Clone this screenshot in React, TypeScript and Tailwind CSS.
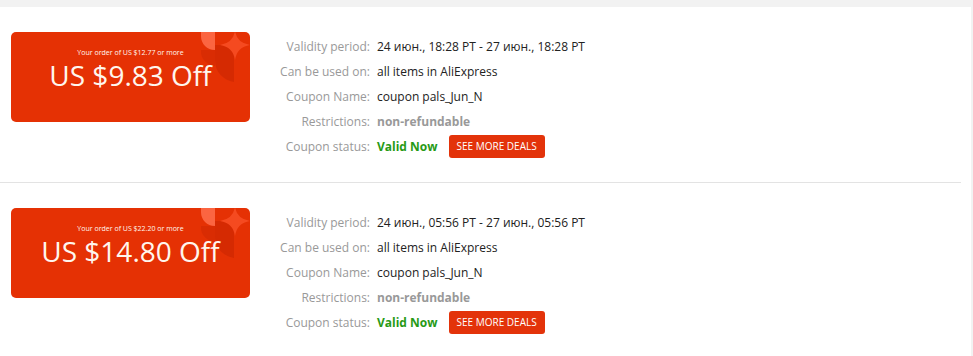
import React from 'react';

type Coupon = {
  min: string;
  off: string;
  from: string;
  to: string;
};

const coupons: Coupon[] = [
  { min: 'US $12.77', off: 'US $9.83', from: '24 июн., 18:28 PT', to: '27 июн., 18:28 PT' },
  { min: 'US $22.20', off: 'US $14.80', from: '24 июн., 05:56 PT', to: '27 июн., 05:56 PT' },
];

function CardDecor() {
  return (
    <svg className="absolute top-0 right-0 w-[50px] h-[50px]" viewBox="0 0 50 50">
      {/* dark band under the leaf and star */}
      <path d="M1 18 H15 V34 C7 33 1 27 1 20 Z" fill="#b81f00" opacity="0.25" />
      <path d="M15 13 H34 V50 C23 48 15 40 15 28 Z" fill="#b01c00" opacity="0.3" />
      {/* light leaf */}
      <path d="M1 0 H15 V18 C7 18 1 12 1 4 Z" fill="#ff6f4c" opacity="0.85" />
      {/* star */}
      <path d="M35 -1 Q37 11 50 13 Q37 15 35 28 Q33 15 20 13 Q33 11 35 -1 Z" fill="#f54a20" />
    </svg>
  );
}

function CouponCard({ coupon }: { coupon: Coupon }) {
  return (
    <div className="relative overflow-hidden w-[239px] h-[90px] shrink-0 rounded-[5px] bg-[#e53104] text-center text-[#fff6ee]">
      <CardDecor />
      <div className="relative pt-[16px]">
        <div className="text-[7px] leading-[10px]">Your order of {coupon.min} or more</div>
        <div className="text-[28px] leading-[36px] -mt-[1px]">{coupon.off} Off</div>
      </div>
    </div>
  );
}

function Row({ label, children }: { label: string; children: React.ReactNode }) {
  return (
    <div className="flex h-[25px] items-center">
      <div className="w-[107px] pr-[7px] text-right text-[#999]">{label}</div>
      <div className="flex items-center text-[#222]">{children}</div>
    </div>
  );
}

export default function App() {
  return (
    <div
      className="h-screen overflow-hidden bg-[#f2f2f2] text-[12px]"
      style={{ fontFamily: '"Open Sans", "Noto Sans", sans-serif' }}
    >
      <div className="mt-[7px] w-[971px] h-full bg-white">
        {coupons.map((c, i) => (
          <div
            key={i}
            className={`flex pt-[25px] pb-[23px] mr-[10px] ${
              i === 0 ? 'border-b border-[#e3e3e3]' : ''
            }`}
          >
            <div className="pl-[11px]">
              <CouponCard coupon={c} />
            </div>
            <div className="ml-[20px] mt-[2px] leading-[25px]">
              <Row label="Validity period:">
                {c.from} - {c.to}
              </Row>
              <Row label="Can be used on:">all items in AliExpress</Row>
              <Row label="Coupon Name:">coupon pals_Jun_N</Row>
              <Row label="Restrictions:">
                <span className="font-bold text-[#999]">non-refundable</span>
              </Row>
              <Row label="Coupon status:">
                <span className="font-bold text-[#279a16]">Valid Now</span>
                <button className="ml-[11px] h-[23px] px-[8px] rounded-[3px] bg-[#e3330a] text-[10px] leading-[23px] text-white">
                  SEE MORE DEALS
                </button>
              </Row>
            </div>
          </div>
        ))}
      </div>
    </div>
  );
}
